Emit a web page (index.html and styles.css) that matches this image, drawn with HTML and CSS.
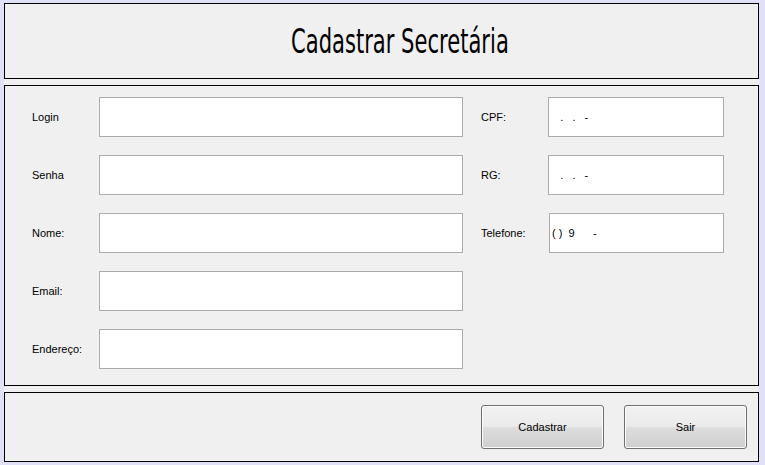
FILE: index.html
```html
<!DOCTYPE html>
<html lang="pt-BR">
<head>
<meta charset="utf-8">
<title>Cadastrar Secretária</title>
<link rel="stylesheet" href="styles.css">
</head>
<body>
<div class="window">
  <div class="panel header">
    <h1 class="title"><span class="title-text">Cadastrar Secretária</span></h1>
  </div>
  <div class="panel form">
    <label class="lbl">Login</label>
    <div class="field"></div>
    <label class="lbl lbl-right">CPF:</label>
    <div class="field mask">   .   .   -</div>

    <label class="lbl">Senha</label>
    <div class="field"></div>
    <label class="lbl lbl-right">RG:</label>
    <div class="field mask">   .   .   -</div>

    <label class="lbl">Nome:</label>
    <div class="field"></div>
    <label class="lbl lbl-right">Telefone:</label>
    <div class="field phone mask">( )  9      -</div>

    <label class="lbl">Email:</label>
    <div class="field"></div>
    <span></span><span></span>

    <label class="lbl">Endereço:</label>
    <div class="field"></div>
    <span></span><span></span>
  </div>
  <div class="panel actions">
    <button class="btn">Cadastrar</button>
    <button class="btn">Sair</button>
  </div>
</div>
</body>
</html>
```

FILE: styles.css
```css
html, body {
  margin: 0;
  padding: 0;
  background: #e0e0f8;
}
body {
  width: 765px;
  height: 465px;
  overflow: hidden;
  font-family: "Liberation Sans", Arial, sans-serif;
  font-size: 11px;
  color: #000;
}
.window {
  margin: 3px 0 0 4px;
  width: 755px;
  height: 459px;
  background: #f0f0f0;
  display: flex;
  flex-direction: column;
  gap: 6px;
}
.panel {
  border: 1px solid #000;
  box-sizing: border-box;
}
.header {
  height: 76px;
  display: flex;
  align-items: center;
  padding-left: 286px;
}
.title {
  margin: 0;
  font-family: "DejaVu Sans Condensed", "DejaVu Sans", sans-serif;
  font-weight: normal;
  font-size: 33px;
  line-height: 1;
  color: #000;
}
.title-text {
  display: inline-block;
  transform: scaleX(0.71);
  transform-origin: left center;
  white-space: nowrap;
}
.form {
  height: 301px;
  display: grid;
  grid-template-columns: 67px 364px 85px 176px;
  grid-template-rows: repeat(5, 40px);
  row-gap: 18px;
  padding: 11px 0 0 27px;
  align-items: center;
}
.lbl {
  display: block;
}
.lbl-right {
  padding-left: 18px;
}
.field {
  height: 40px;
  box-sizing: border-box;
  background: #fff;
  border: 1px solid #ababab;
  display: flex;
  align-items: center;
  padding-left: 2px;
  white-space: pre;
  font-size: 11px;
}
.phone {
  margin-left: 1px;
}
.actions {
  height: 70px;
  display: flex;
  align-items: center;
  justify-content: flex-end;
  gap: 20px;
  padding-right: 11px;
}
.btn {
  width: 123px;
  height: 44px;
  border: 1px solid #707070;
  border-radius: 3px;
  background: linear-gradient(#f2f2f2 0%, #ebebeb 48%, #dddddd 52%, #cfcfcf 100%);
  box-shadow: inset 0 0 0 1px #fbfbfb;
  font-family: "Liberation Sans", Arial, sans-serif;
  font-size: 11px;
  color: #000;
  padding: 0;
}
```
